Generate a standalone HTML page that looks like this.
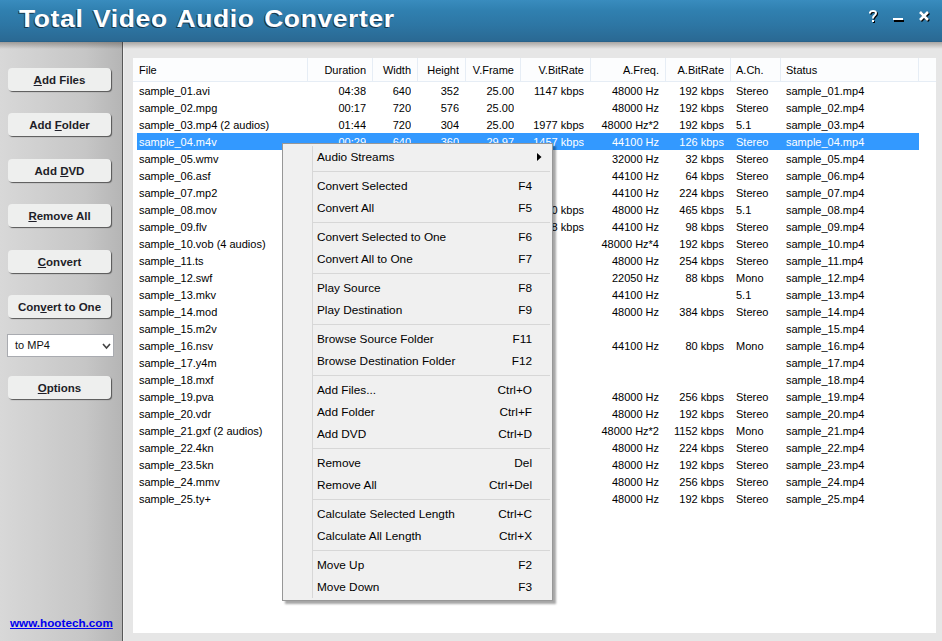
<!DOCTYPE html>
<html><head><meta charset="utf-8">
<style>
*{margin:0;padding:0;box-sizing:border-box}
html,body{width:942px;height:641px;overflow:hidden;background:#e4e4e4;font-family:"Liberation Sans",sans-serif}
#hdr{position:absolute;left:0;top:0;width:942px;height:42px;background:linear-gradient(#398cbe,#3080b0 25%,#2d76a4 60%,#2a6892);}
#hdrline{position:absolute;left:0;top:41px;width:942px;height:1px;background:#28628a}
#hshadow{position:absolute;left:0;top:42px;width:942px;height:7px;background:linear-gradient(rgba(40,30,20,0.32),rgba(40,30,20,0))}
#title{position:absolute;left:19px;top:5px;font-weight:bold;font-size:24px;color:#fff;letter-spacing:0.6px;word-spacing:1.5px;text-shadow:-1px 1px 0 rgba(15,25,35,0.7);white-space:nowrap;transform:scaleX(1.1);transform-origin:0 0}
.ic{position:absolute;color:#fff;font-weight:bold;text-shadow:1px 1px 0 #000}
#left{position:absolute;left:0;top:42px;width:122px;height:599px;background:linear-gradient(90deg,#d8d8d8,#c6c6c6 70%,#b5b5b5)}
#div{position:absolute;left:122px;top:42px;width:1px;height:599px;background:#585858}
#right{position:absolute;left:123px;top:42px;width:819px;height:599px;background:#e6e6e6;border-left:1px solid #efefef}
.btn{position:absolute;left:8px;width:103px;height:23px;background:#eeefee;border-radius:4px;box-shadow:1px 1px 1px #555;font-weight:bold;font-size:11.5px;color:#1e1e28;text-align:center;line-height:24px}
.btn u{text-decoration:underline}
#combo{position:absolute;left:7px;top:334px;width:107px;height:23px;background:#fff;border:1px solid #a9abb0;font-size:11px;color:#111;line-height:20px;padding-left:7px}
#link{position:absolute;left:10px;top:616px;font-weight:bold;font-size:11.7px;color:#0000ee;text-decoration:underline;white-space:nowrap}
#list{position:absolute;left:133px;top:58px;width:803px;height:575px;background:#fff}
#lhead{position:absolute;left:133px;top:58px;width:803px;height:24px;background:#fcfdfe;border-bottom:1px solid #e6edf5}
.sep{position:absolute;top:58px;width:1px;height:23px;background:#e6edf5}
.c{position:absolute;font-size:11px;color:#000;white-space:nowrap;height:17px;line-height:19px;overflow:hidden}
.r{text-align:right}
.sel{color:#fff}
#selbar{position:absolute;left:137px;top:133px;width:782px;height:17px;background:#3399ff}
#menu{position:absolute;left:282px;top:143px;width:271px;height:458px;background:#f0f0f0;border:1px solid #979797;box-shadow:3px 3px 2px rgba(0,0,0,0.35)}
#gut{position:absolute;left:312px;top:146px;width:1px;height:452px;background:#d7d7d7}
.mi{position:absolute;left:317px;font-size:11.8px;color:#000;white-space:nowrap;height:22px;line-height:22px}
.ms{position:absolute;left:432px;width:100px;text-align:right;font-size:11.8px;color:#000;white-space:nowrap;height:22px;line-height:22px}
.msep{position:absolute;left:313px;width:237px;height:1px;background:#d7d7d7}
</style></head><body>
<div id="hdr"></div><div id="hdrline"></div>
<div id="title">Total Video Audio Converter</div>
<svg style="position:absolute;left:860px;top:0" width="82" height="30" viewBox="860 0 82 30">
<g transform="translate(1,1)" stroke="#000" fill="none" stroke-width="2">
<path d="M870 13.5 V12.5 Q870.5 11 873 11 Q876 11 876 13 Q876 14.5 874.5 15.5 Q873 16.5 873 18.5"/>
<path d="M920 12 L928 20 M928 12 L920 20" stroke-width="2.6"/>
</g>
<rect x="873" y="21" width="2" height="2" fill="#000"/>
<rect x="894" y="20" width="10" height="2" fill="#000"/>
<g stroke="#fff" fill="none" stroke-width="2">
<path d="M870 13.5 V12.5 Q870.5 11 873 11 Q876 11 876 13 Q876 14.5 874.5 15.5 Q873 16.5 873 18.5"/>
<path d="M920 12 L928 20 M928 12 L920 20" stroke-width="2.6"/>
</g>
<rect x="872" y="20" width="2" height="2" fill="#fff"/>
<rect x="893" y="18" width="10" height="2" fill="#fff"/>
</svg>
<div id="left"></div><div id="div"></div><div id="right"></div>
<div id="hshadow"></div>

<div class="btn" style="top:68px"><u>A</u>dd Files</div>
<div class="btn" style="top:113px">Add <u>F</u>older</div>
<div class="btn" style="top:159px">Add <u>D</u>VD</div>
<div class="btn" style="top:204px"><u>R</u>emove All</div>
<div class="btn" style="top:250px"><u>C</u>onvert</div>
<div class="btn" style="top:295px">Con<u>v</u>ert to One</div>
<div class="btn" style="top:376px"><u>O</u>ptions</div>
<div id="combo">to MP4<svg style="position:absolute;left:94px;top:8px" width="9" height="7" viewBox="0 0 9 7"><path d="M1 1 L4.5 5 L8 1" stroke="#444" stroke-width="1.6" fill="none"/></svg></div>
<div id="link">www.hootech.com</div>
<div id="list"></div><div id="lhead"></div>
<div class="sep" style="left:307px"></div>
<div class="sep" style="left:372px"></div>
<div class="sep" style="left:417px"></div>
<div class="sep" style="left:465px"></div>
<div class="sep" style="left:520px"></div>
<div class="sep" style="left:590px"></div>
<div class="sep" style="left:665px"></div>
<div class="sep" style="left:730px"></div>
<div class="sep" style="left:780px"></div>
<div class="sep" style="left:918px"></div>
<div id="selbar"></div>
<div class="c h" style="left:139px;top:61px;width:167px">File</div>
<div class="c r h" style="left:307px;top:61px;width:59px">Duration</div>
<div class="c r h" style="left:372px;top:61px;width:39px">Width</div>
<div class="c r h" style="left:417px;top:61px;width:42px">Height</div>
<div class="c r h" style="left:465px;top:61px;width:49px">V.Frame</div>
<div class="c r h" style="left:520px;top:61px;width:64px">V.BitRate</div>
<div class="c r h" style="left:590px;top:61px;width:69px">A.Freq.</div>
<div class="c r h" style="left:665px;top:61px;width:59px">A.BitRate</div>
<div class="c h" style="left:736px;top:61px;width:43px">A.Ch.</div>
<div class="c h" style="left:786px;top:61px;width:131px">Status</div>
<div class="c " style="left:139px;top:82px;width:167px">sample_01.avi</div>
<div class="c r " style="left:307px;top:82px;width:59px">04:38</div>
<div class="c r " style="left:372px;top:82px;width:39px">640</div>
<div class="c r " style="left:417px;top:82px;width:42px">352</div>
<div class="c r " style="left:465px;top:82px;width:49px">25.00</div>
<div class="c r " style="left:520px;top:82px;width:64px">1147 kbps</div>
<div class="c r " style="left:590px;top:82px;width:69px">48000 Hz</div>
<div class="c r " style="left:665px;top:82px;width:59px">192 kbps</div>
<div class="c " style="left:736px;top:82px;width:43px">Stereo</div>
<div class="c " style="left:786px;top:82px;width:131px">sample_01.mp4</div>
<div class="c " style="left:139px;top:99px;width:167px">sample_02.mpg</div>
<div class="c r " style="left:307px;top:99px;width:59px">00:17</div>
<div class="c r " style="left:372px;top:99px;width:39px">720</div>
<div class="c r " style="left:417px;top:99px;width:42px">576</div>
<div class="c r " style="left:465px;top:99px;width:49px">25.00</div>
<div class="c r " style="left:590px;top:99px;width:69px">48000 Hz</div>
<div class="c r " style="left:665px;top:99px;width:59px">192 kbps</div>
<div class="c " style="left:736px;top:99px;width:43px">Stereo</div>
<div class="c " style="left:786px;top:99px;width:131px">sample_02.mp4</div>
<div class="c " style="left:139px;top:116px;width:167px">sample_03.mp4 (2 audios)</div>
<div class="c r " style="left:307px;top:116px;width:59px">01:44</div>
<div class="c r " style="left:372px;top:116px;width:39px">720</div>
<div class="c r " style="left:417px;top:116px;width:42px">304</div>
<div class="c r " style="left:465px;top:116px;width:49px">25.00</div>
<div class="c r " style="left:520px;top:116px;width:64px">1977 kbps</div>
<div class="c r " style="left:590px;top:116px;width:69px">48000 Hz*2</div>
<div class="c r " style="left:665px;top:116px;width:59px">192 kbps</div>
<div class="c " style="left:736px;top:116px;width:43px">5.1</div>
<div class="c " style="left:786px;top:116px;width:131px">sample_03.mp4</div>
<div class="c sel" style="left:139px;top:133px;width:167px">sample_04.m4v</div>
<div class="c r sel" style="left:307px;top:133px;width:59px">00:29</div>
<div class="c r sel" style="left:372px;top:133px;width:39px">640</div>
<div class="c r sel" style="left:417px;top:133px;width:42px">360</div>
<div class="c r sel" style="left:465px;top:133px;width:49px">29.97</div>
<div class="c r sel" style="left:520px;top:133px;width:64px">1457 kbps</div>
<div class="c r sel" style="left:590px;top:133px;width:69px">44100 Hz</div>
<div class="c r sel" style="left:665px;top:133px;width:59px">126 kbps</div>
<div class="c sel" style="left:736px;top:133px;width:43px">Stereo</div>
<div class="c sel" style="left:786px;top:133px;width:131px">sample_04.mp4</div>
<div class="c " style="left:139px;top:150px;width:167px">sample_05.wmv</div>
<div class="c r " style="left:590px;top:150px;width:69px">32000 Hz</div>
<div class="c r " style="left:665px;top:150px;width:59px">32 kbps</div>
<div class="c " style="left:736px;top:150px;width:43px">Stereo</div>
<div class="c " style="left:786px;top:150px;width:131px">sample_05.mp4</div>
<div class="c " style="left:139px;top:167px;width:167px">sample_06.asf</div>
<div class="c r " style="left:590px;top:167px;width:69px">44100 Hz</div>
<div class="c r " style="left:665px;top:167px;width:59px">64 kbps</div>
<div class="c " style="left:736px;top:167px;width:43px">Stereo</div>
<div class="c " style="left:786px;top:167px;width:131px">sample_06.mp4</div>
<div class="c " style="left:139px;top:184px;width:167px">sample_07.mp2</div>
<div class="c r " style="left:590px;top:184px;width:69px">44100 Hz</div>
<div class="c r " style="left:665px;top:184px;width:59px">224 kbps</div>
<div class="c " style="left:736px;top:184px;width:43px">Stereo</div>
<div class="c " style="left:786px;top:184px;width:131px">sample_07.mp4</div>
<div class="c " style="left:139px;top:201px;width:167px">sample_08.mov</div>
<div class="c r " style="left:520px;top:201px;width:64px">1500 kbps</div>
<div class="c r " style="left:590px;top:201px;width:69px">48000 Hz</div>
<div class="c r " style="left:665px;top:201px;width:59px">465 kbps</div>
<div class="c " style="left:736px;top:201px;width:43px">5.1</div>
<div class="c " style="left:786px;top:201px;width:131px">sample_08.mp4</div>
<div class="c " style="left:139px;top:218px;width:167px">sample_09.flv</div>
<div class="c r " style="left:520px;top:218px;width:64px">1238 kbps</div>
<div class="c r " style="left:590px;top:218px;width:69px">44100 Hz</div>
<div class="c r " style="left:665px;top:218px;width:59px">98 kbps</div>
<div class="c " style="left:736px;top:218px;width:43px">Stereo</div>
<div class="c " style="left:786px;top:218px;width:131px">sample_09.mp4</div>
<div class="c " style="left:139px;top:235px;width:167px">sample_10.vob (4 audios)</div>
<div class="c r " style="left:590px;top:235px;width:69px">48000 Hz*4</div>
<div class="c r " style="left:665px;top:235px;width:59px">192 kbps</div>
<div class="c " style="left:736px;top:235px;width:43px">Stereo</div>
<div class="c " style="left:786px;top:235px;width:131px">sample_10.mp4</div>
<div class="c " style="left:139px;top:252px;width:167px">sample_11.ts</div>
<div class="c r " style="left:590px;top:252px;width:69px">48000 Hz</div>
<div class="c r " style="left:665px;top:252px;width:59px">254 kbps</div>
<div class="c " style="left:736px;top:252px;width:43px">Stereo</div>
<div class="c " style="left:786px;top:252px;width:131px">sample_11.mp4</div>
<div class="c " style="left:139px;top:269px;width:167px">sample_12.swf</div>
<div class="c r " style="left:590px;top:269px;width:69px">22050 Hz</div>
<div class="c r " style="left:665px;top:269px;width:59px">88 kbps</div>
<div class="c " style="left:736px;top:269px;width:43px">Mono</div>
<div class="c " style="left:786px;top:269px;width:131px">sample_12.mp4</div>
<div class="c " style="left:139px;top:286px;width:167px">sample_13.mkv</div>
<div class="c r " style="left:590px;top:286px;width:69px">44100 Hz</div>
<div class="c " style="left:736px;top:286px;width:43px">5.1</div>
<div class="c " style="left:786px;top:286px;width:131px">sample_13.mp4</div>
<div class="c " style="left:139px;top:303px;width:167px">sample_14.mod</div>
<div class="c r " style="left:590px;top:303px;width:69px">48000 Hz</div>
<div class="c r " style="left:665px;top:303px;width:59px">384 kbps</div>
<div class="c " style="left:736px;top:303px;width:43px">Stereo</div>
<div class="c " style="left:786px;top:303px;width:131px">sample_14.mp4</div>
<div class="c " style="left:139px;top:320px;width:167px">sample_15.m2v</div>
<div class="c " style="left:786px;top:320px;width:131px">sample_15.mp4</div>
<div class="c " style="left:139px;top:337px;width:167px">sample_16.nsv</div>
<div class="c r " style="left:590px;top:337px;width:69px">44100 Hz</div>
<div class="c r " style="left:665px;top:337px;width:59px">80 kbps</div>
<div class="c " style="left:736px;top:337px;width:43px">Mono</div>
<div class="c " style="left:786px;top:337px;width:131px">sample_16.mp4</div>
<div class="c " style="left:139px;top:354px;width:167px">sample_17.y4m</div>
<div class="c " style="left:786px;top:354px;width:131px">sample_17.mp4</div>
<div class="c " style="left:139px;top:371px;width:167px">sample_18.mxf</div>
<div class="c " style="left:786px;top:371px;width:131px">sample_18.mp4</div>
<div class="c " style="left:139px;top:388px;width:167px">sample_19.pva</div>
<div class="c r " style="left:590px;top:388px;width:69px">48000 Hz</div>
<div class="c r " style="left:665px;top:388px;width:59px">256 kbps</div>
<div class="c " style="left:736px;top:388px;width:43px">Stereo</div>
<div class="c " style="left:786px;top:388px;width:131px">sample_19.mp4</div>
<div class="c " style="left:139px;top:405px;width:167px">sample_20.vdr</div>
<div class="c r " style="left:590px;top:405px;width:69px">48000 Hz</div>
<div class="c r " style="left:665px;top:405px;width:59px">192 kbps</div>
<div class="c " style="left:736px;top:405px;width:43px">Stereo</div>
<div class="c " style="left:786px;top:405px;width:131px">sample_20.mp4</div>
<div class="c " style="left:139px;top:422px;width:167px">sample_21.gxf (2 audios)</div>
<div class="c r " style="left:590px;top:422px;width:69px">48000 Hz*2</div>
<div class="c r " style="left:665px;top:422px;width:59px">1152 kbps</div>
<div class="c " style="left:736px;top:422px;width:43px">Mono</div>
<div class="c " style="left:786px;top:422px;width:131px">sample_21.mp4</div>
<div class="c " style="left:139px;top:439px;width:167px">sample_22.4kn</div>
<div class="c r " style="left:590px;top:439px;width:69px">48000 Hz</div>
<div class="c r " style="left:665px;top:439px;width:59px">224 kbps</div>
<div class="c " style="left:736px;top:439px;width:43px">Stereo</div>
<div class="c " style="left:786px;top:439px;width:131px">sample_22.mp4</div>
<div class="c " style="left:139px;top:456px;width:167px">sample_23.5kn</div>
<div class="c r " style="left:590px;top:456px;width:69px">48000 Hz</div>
<div class="c r " style="left:665px;top:456px;width:59px">192 kbps</div>
<div class="c " style="left:736px;top:456px;width:43px">Stereo</div>
<div class="c " style="left:786px;top:456px;width:131px">sample_23.mp4</div>
<div class="c " style="left:139px;top:473px;width:167px">sample_24.mmv</div>
<div class="c r " style="left:590px;top:473px;width:69px">48000 Hz</div>
<div class="c r " style="left:665px;top:473px;width:59px">256 kbps</div>
<div class="c " style="left:736px;top:473px;width:43px">Stereo</div>
<div class="c " style="left:786px;top:473px;width:131px">sample_24.mp4</div>
<div class="c " style="left:139px;top:490px;width:167px">sample_25.ty+</div>
<div class="c r " style="left:590px;top:490px;width:69px">48000 Hz</div>
<div class="c r " style="left:665px;top:490px;width:59px">192 kbps</div>
<div class="c " style="left:736px;top:490px;width:43px">Stereo</div>
<div class="c " style="left:786px;top:490px;width:131px">sample_25.mp4</div>
<div id="menu"></div><div id="gut"></div>
<div class="mi" style="top:146px">Audio Streams</div>
<div class="msep" style="top:171px"></div>
<div class="mi" style="top:175px">Convert Selected</div>
<div class="ms" style="top:175px">F4</div>
<div class="mi" style="top:197px">Convert All</div>
<div class="ms" style="top:197px">F5</div>
<div class="msep" style="top:222px"></div>
<div class="mi" style="top:226px">Convert Selected to One</div>
<div class="ms" style="top:226px">F6</div>
<div class="mi" style="top:248px">Convert All to One</div>
<div class="ms" style="top:248px">F7</div>
<div class="msep" style="top:273px"></div>
<div class="mi" style="top:277px">Play Source</div>
<div class="ms" style="top:277px">F8</div>
<div class="mi" style="top:299px">Play Destination</div>
<div class="ms" style="top:299px">F9</div>
<div class="msep" style="top:324px"></div>
<div class="mi" style="top:328px">Browse Source Folder</div>
<div class="ms" style="top:328px">F11</div>
<div class="mi" style="top:350px">Browse Destination Folder</div>
<div class="ms" style="top:350px">F12</div>
<div class="msep" style="top:375px"></div>
<div class="mi" style="top:379px">Add Files...</div>
<div class="ms" style="top:379px">Ctrl+O</div>
<div class="mi" style="top:401px">Add Folder</div>
<div class="ms" style="top:401px">Ctrl+F</div>
<div class="mi" style="top:423px">Add DVD</div>
<div class="ms" style="top:423px">Ctrl+D</div>
<div class="msep" style="top:448px"></div>
<div class="mi" style="top:452px">Remove</div>
<div class="ms" style="top:452px">Del</div>
<div class="mi" style="top:474px">Remove All</div>
<div class="ms" style="top:474px">Ctrl+Del</div>
<div class="msep" style="top:499px"></div>
<div class="mi" style="top:503px">Calculate Selected Length</div>
<div class="ms" style="top:503px">Ctrl+C</div>
<div class="mi" style="top:525px">Calculate All Length</div>
<div class="ms" style="top:525px">Ctrl+X</div>
<div class="msep" style="top:550px"></div>
<div class="mi" style="top:554px">Move Up</div>
<div class="ms" style="top:554px">F2</div>
<div class="mi" style="top:576px">Move Down</div>
<div class="ms" style="top:576px">F3</div>
<svg style="position:absolute;left:537px;top:153px" width="5" height="8"><path d="M0 0 L4.5 4 L0 8Z" fill="#000"/></svg>
</body></html>
